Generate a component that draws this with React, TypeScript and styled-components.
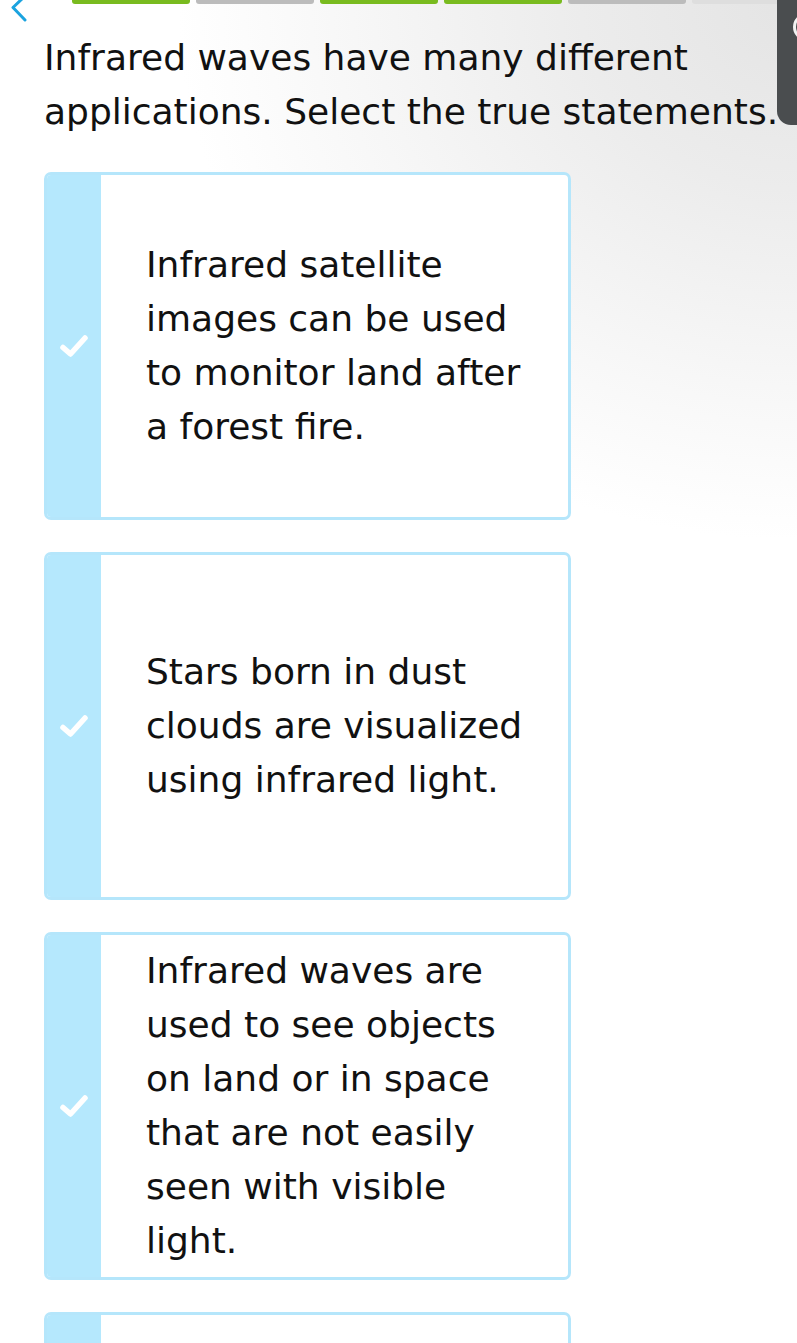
import React from "react";
import styled, { createGlobalStyle } from "styled-components";

const GlobalStyle = createGlobalStyle`
    html, body {
        margin: 0;
        padding: 0;
    }
    body {
        font-family: "DejaVu Sans", Verdana, sans-serif;
        color: #111;
        background: #fff;
    }
`;

const STEPS: Array<"done" | "todo" | "next"> = ["done", "todo", "done", "done", "todo", "next"];

const STATEMENTS = [
    "Infrared satellite images can be used to monitor land after a forest fire.",
    "Stars born in dust clouds are visualized using infrared light.",
    "Infrared waves are used to see objects on land or in space that are not easily seen with visible light.",
    "",
];

const CheckIcon = () => (
    <svg width="32" height="26" viewBox="0 0 32 26">
        <path
            d="M5 14.5 L12.5 21 L27 5"
            fill="none"
            stroke="#fff"
            strokeWidth="5.5"
            strokeLinecap="round"
            strokeLinejoin="round"
        />
    </svg>
);

const App = () => {
    return (
        <Page>
            <GlobalStyle />
            <TopBar>
                <BackButton aria-label="back">
                    <svg width="22" height="26" viewBox="0 0 22 26">
                        <path
                            d="M16 -3 L5 7.5 L17 20"
                            fill="none"
                            stroke="#1ba3df"
                            strokeWidth="3"
                            strokeLinecap="round"
                            strokeLinejoin="round"
                        />
                    </svg>
                </BackButton>
                <Progress>
                    {STEPS.map((s, i) => (
                        <Segment key={i} $state={s} />
                    ))}
                </Progress>
            </TopBar>
            <SidePanel>
                <SideKnob />
            </SidePanel>
            <Content>
                <Question>
                    Infrared waves have many different applications. Select the true statements.
                </Question>
                <Options>
                    {STATEMENTS.map((text, i) => (
                        <Card key={i}>
                            <Strip>{text && <CheckIcon />}</Strip>
                            <CardText>{text}</CardText>
                        </Card>
                    ))}
                </Options>
            </Content>
        </Page>
    );
};

const Page = styled.div`
    position: relative;
    min-height: 1343px;
    overflow: hidden;
    background: radial-gradient(
        ellipse 620px 540px at 100% 0%,
        #e4e4e4 0%,
        #ececec 35%,
        #f8f8f8 75%,
        #ffffff 100%
    );
`;

const TopBar = styled.div`
    position: relative;
    height: 30px;
`;

const BackButton = styled.div`
    position: absolute;
    left: 8px;
    top: 0;
    width: 22px;
    height: 26px;
`;

const Progress = styled.div`
    display: flex;
    gap: 6px;
    padding-left: 72px;
`;

const Segment = styled.div<{ $state: "done" | "todo" | "next" }>`
    flex: 0 0 118px;
    height: 4px;
    border-radius: 0 0 3px 3px;
    background: ${(p) =>
        p.$state === "done" ? "#79bb1f" : p.$state === "todo" ? "#bcbcbc" : "#dedede"};
`;

const SidePanel = styled.div`
    position: absolute;
    top: 0;
    right: 0;
    width: 20px;
    height: 125px;
    background: #4a4d4f;
    border-bottom-left-radius: 14px;
    overflow: hidden;
    z-index: 2;
`;

const SideKnob = styled.div`
    position: absolute;
    left: 16px;
    top: 14px;
    width: 24px;
    height: 26px;
    border-radius: 50%;
    border: 3px solid #f2f2f2;
    box-sizing: border-box;
`;

const Content = styled.div`
    padding: 1px 0 0 44px;
`;

const Question = styled.h1`
    margin: 0;
    font-weight: normal;
    font-size: 36px;
    line-height: 54px;
    width: 750px;
`;

const Options = styled.div`
    display: flex;
    flex-direction: column;
    gap: 32px;
    margin-top: 33px;
    width: 527px;
`;

const Card = styled.div`
    display: flex;
    min-height: 348px;
    box-sizing: border-box;
    border: 3px solid #b5e6fb;
    border-radius: 7px;
    background: #fff;
    overflow: hidden;
`;

const Strip = styled.div`
    flex: 0 0 54px;
    background: #b5e8fd;
    display: flex;
    align-items: center;
    justify-content: center;
`;

const CardText = styled.div`
    flex: 1;
    display: flex;
    align-items: center;
    padding: 9px 40px 9px 45px;
    font-size: 36px;
    line-height: 54px;
`;

export default App;
